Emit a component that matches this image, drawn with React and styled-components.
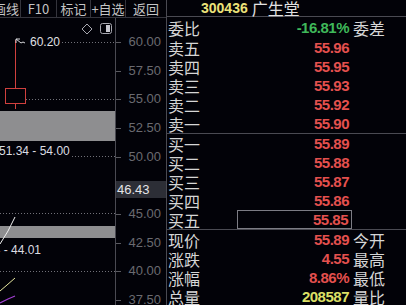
import React from "react";
import styled, { createGlobalStyle } from "styled-components";

const GlobalStyle = createGlobalStyle`
  html, body {
    margin: 0;
    padding: 0;
    background: #020208;
  }
  body {
    width: 406px;
    height: 305px;
    overflow: hidden;
  }
`;

const Screen = styled.div`
  display: flex;
  width: 406px;
  height: 305px;
  overflow: hidden;
  background: #020208;
  font-family: "Liberation Sans", "Noto Sans CJK SC", sans-serif;
`;

const LeftPane = styled.div`
  width: 166px;
  flex-shrink: 0;
  display: flex;
  flex-direction: column;
`;

const Toolbar = styled.div`
  height: 17px;
  display: flex;
  border-bottom: 1px solid #34343c;
  overflow: hidden;
`;

const ToolButton = styled.div`
  width: ${p => p.$w}px;
  flex-shrink: 0;
  display: flex;
  align-items: center;
  justify-content: ${p => (p.$clip ? "flex-end" : "center")};
  padding-right: ${p => (p.$clip ? 1 : 0)}px;
  box-sizing: border-box;
  border-right: ${p => (p.$last ? "none" : "1px solid #34343c")};
  overflow: hidden;
  white-space: nowrap;
  color: #c4c4c4;
  font-family: "Noto Sans CJK SC", "Liberation Sans", sans-serif;
  font-size: 13px;
  line-height: 17px;
`;

const ChartBody = styled.div`
  flex: 1;
  display: flex;
`;

const Plot = styled.svg`
  width: 115px;
  height: 287px;
  flex-shrink: 0;
  display: block;
`;

const Axis = styled.div`
  position: relative;
  flex: 1;
  border-left: 1px solid #4a4a52;
`;

const Tick = styled.div`
  position: absolute;
  left: 0;
  width: 5px;
  height: 1px;
  background: #5a5a60;
`;

const AxisLabel = styled.div`
  position: absolute;
  right: 5px;
  height: 14px;
  line-height: 14px;
  font-size: 13px;
  color: #6a6a70;
`;

const CursorLabel = styled.div`
  position: absolute;
  left: 0;
  right: 0;
  height: 17px;
  padding-left: 1px;
  line-height: 17px;
  font-size: 13px;
  color: #e4e4e8;
  background: #2c2e36;
`;

const RightPane = styled.div`
  flex: 1;
  display: flex;
  flex-direction: column;
  border-left: 1px solid #4a4a52;
`;

const Header = styled.div`
  height: 23px;
  display: flex;
  align-items: center;
  padding-left: 34px;
  gap: 4px;
  border-bottom: 1px solid #4a4a52;
`;

const Code = styled.span`
  color: #ece27a;
  font-size: 14px;
  font-weight: bold;
`;

const Name = styled.span`
  color: #e2e2e2;
  font-family: "Noto Sans CJK SC", sans-serif;
  font-size: 16px;
  line-height: 1;
`;

const Section = styled.div`
  display: flex;
  flex-direction: column;
  border-bottom: ${p => (p.$line ? "1px solid #4a4a52" : "none")};
`;

const Row = styled.div`
  height: ${p => p.$h || 19}px;
  display: grid;
  grid-template-columns: 70px 115px 1fr;
  align-items: center;
`;

const Label = styled.span`
  padding-left: 1px;
  color: #d6d6d6;
  font-family: "Noto Sans CJK SC", sans-serif;
  font-size: 16px;
  line-height: 1;
  white-space: nowrap;
`;

const Value = styled.span`
  height: 100%;
  box-sizing: border-box;
  display: flex;
  align-items: center;
  justify-content: flex-end;
  padding-right: 3px;
  border: ${p => (p.$boxed ? "1px solid #7c7c84" : "none")};
  color: ${p => p.$color};
  font-size: 15px;
  font-weight: bold;
  letter-spacing: -0.5px;
`;

const RED = "#e4504e";
const GREEN = "#3fb85a";
const YELLOW = "#dce066";

const tools = [
  { t: "画线", w: 21, clip: true },
  { t: "F10", w: 36 },
  { t: "标记", w: 34 },
  { t: "+自选", w: 35 },
  { t: "返回", w: 40, last: true },
];

// axis: 60.00 sits at y=24 inside the chart body, 11.47px per 1.00
const yOf = v => 24 + (60 - v) * 11.47;
const axisValues = [60, 57.5, 55, 52.5, 50, 45, 42.5, 40, 37.5];

const sells = [
  ["卖五", "55.96"],
  ["卖四", "55.95"],
  ["卖三", "55.93"],
  ["卖二", "55.92"],
  ["卖一", "55.90"],
];

const buys = [
  ["买一", "55.89"],
  ["买二", "55.88"],
  ["买三", "55.87"],
  ["买四", "55.86"],
  ["买五", "55.85", true],
];

const stats = [
  ["现价", "55.89", "今开", RED],
  ["涨跌", "4.55", "最高", RED],
  ["涨幅", "8.86%", "最低", RED],
  ["总量", "208587", "量比", YELLOW],
];

function Chart() {
  const dots = "1 2";
  return (
    <Plot viewBox="0 0 115 287">
      <line x1="62" y1="24.5" x2="115" y2="24.5" stroke="#707078" strokeDasharray={dots} />
      <line x1="26" y1="81.5" x2="115" y2="81.5" stroke="#707078" strokeDasharray={dots} />
      <line x1="72" y1="138.5" x2="115" y2="138.5" stroke="#707078" strokeDasharray={dots} />
      <line x1="0" y1="195.5" x2="115" y2="195.5" stroke="#707078" strokeDasharray={dots} />
      <line x1="0" y1="253.5" x2="115" y2="253.5" stroke="#707078" strokeDasharray={dots} />

      {/* little tools at the top right of the plot */}
      <path d="M87 6 L92 11 L87 16 L82 11 Z" fill="none" stroke="#a8a8b0" strokeWidth="1" />
      <rect x="100.5" y="5.5" width="11" height="10" rx="2" fill="none" stroke="#a8a8b0" />
      <rect x="106" y="7" width="4" height="7" fill="#c8c8d0" />

      {/* candle */}
      <line x1="15.5" y1="22" x2="15.5" y2="70" stroke="#d0403e" />
      <line x1="15.5" y1="86" x2="15.5" y2="91" stroke="#d0403e" />
      <rect x="5.5" y="70.5" width="20" height="15" fill="#020208" stroke="#d0403e" />

      {/* high marker */}
      <path d="M16 21 L16 25 M16 21 L20 21 M16 21 L21 25 Q23 23 25 25" fill="none" stroke="#d8d8dc" strokeWidth="1" />
      <text x="30" y="28" fontSize="12" fill="#e0e0e4" fontFamily="Liberation Sans, sans-serif">60.20</text>

      {/* zones */}
      <rect x="0" y="93" width="115" height="30" fill="#8e8e90" />
      <text x="-1" y="137" fontSize="12" fill="#dcdce0" fontFamily="Liberation Sans, sans-serif">51.34 - 54.00</text>
      <rect x="0" y="208" width="115" height="12" fill="#8e8e90" />
      <text x="41" y="236" textAnchor="end" fontSize="12" fill="#dcdce0" fontFamily="Liberation Sans, sans-serif">42.94 - 44.01</text>

      {/* moving averages */}
      <polyline points="0,226 8,213 15,199" fill="none" stroke="#f0f0f0" strokeWidth="1" />
      <polyline points="0,273 7,267 15,260" fill="none" stroke="#e8e8a0" strokeWidth="1" />
      <polyline points="0,285 8,281 15,278" fill="none" stroke="#a040d0" strokeWidth="1.2" />
    </Plot>
  );
}

export default function App() {
  return (
    <Screen>
      <GlobalStyle />
      <LeftPane>
        <Toolbar>
          {tools.map(b => (
            <ToolButton key={b.t} $w={b.w} $clip={b.clip} $last={b.last}>
              {b.t}
            </ToolButton>
          ))}
        </Toolbar>
        <ChartBody>
          <Chart />
          <Axis>
            {axisValues.map(v => (
              <React.Fragment key={v}>
                <Tick style={{ top: Math.round(yOf(v)) }} />
                <AxisLabel style={{ top: Math.round(yOf(v)) - 7 }}>{v.toFixed(2)}</AxisLabel>
              </React.Fragment>
            ))}
            <CursorLabel style={{ top: 163 }}>46.43</CursorLabel>
          </Axis>
        </ChartBody>
      </LeftPane>

      <RightPane>
        <Header>
          <Code>300436</Code>
          <Name>广生堂</Name>
        </Header>
        <Section>
          <Row $h={21}>
            <Label>委比</Label>
            <Value $color={GREEN}>-16.81%</Value>
            <Label>委差</Label>
          </Row>
        </Section>
        <Section $line>
          {sells.map(([l, v]) => (
            <Row key={l}>
              <Label>{l}</Label>
              <Value $color={RED}>{v}</Value>
            </Row>
          ))}
        </Section>
        <Section $line>
          {buys.map(([l, v, boxed]) => (
            <Row key={l}>
              <Label>{l}</Label>
              <Value $color={RED} $boxed={boxed}>{v}</Value>
            </Row>
          ))}
        </Section>
        <Section>
          {stats.map(([l, v, r, c]) => (
            <Row key={l}>
              <Label>{l}</Label>
              <Value $color={c}>{v}</Value>
              <Label>{r}</Label>
            </Row>
          ))}
        </Section>
      </RightPane>
    </Screen>
  );
}
